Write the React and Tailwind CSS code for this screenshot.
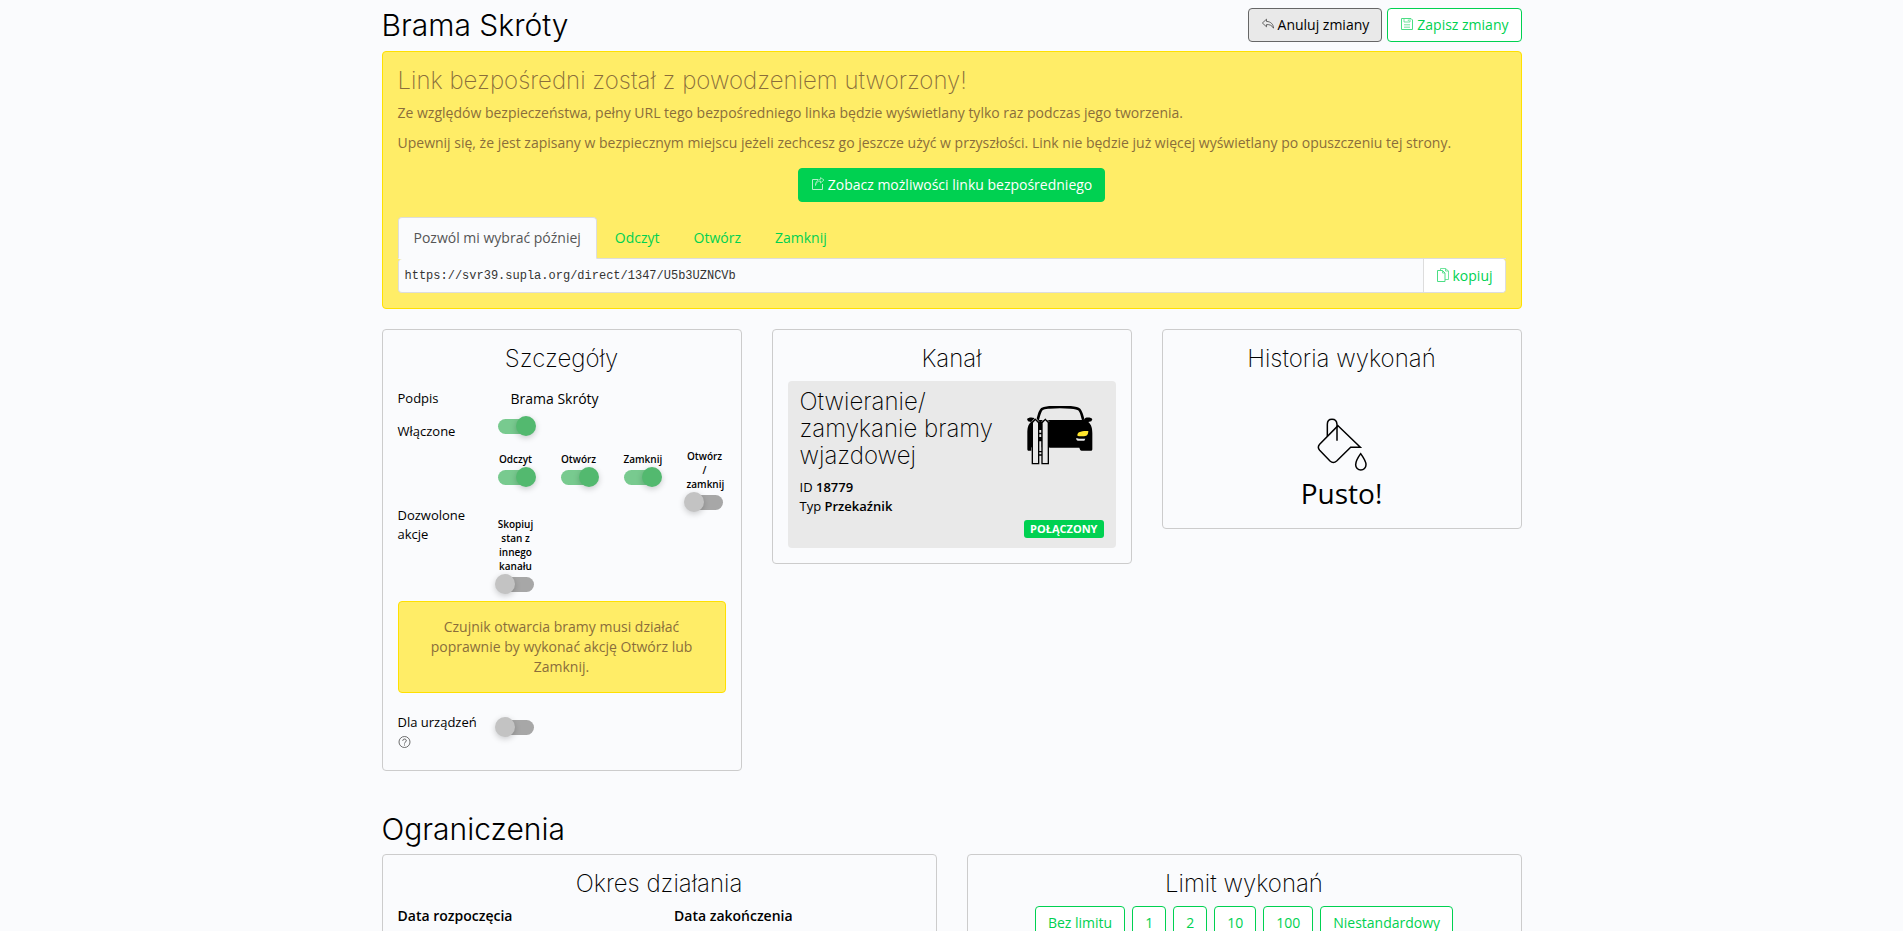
const heading = "font-['Inter',sans-serif] text-2xl leading-[27px] font-extralight";
const pageHeading = "font-['Inter',sans-serif] text-[30px] leading-[33px] font-light";
const button =
  "inline-flex h-[34px] cursor-pointer items-center justify-center gap-[3px] rounded border px-3 text-sm leading-5";

function LineIcon({ children, className = "" }) {
  return (
    <svg
      viewBox="0 0 14 14"
      fill="none"
      stroke="currentColor"
      strokeWidth="1"
      aria-hidden="true"
      className={`size-3.5 shrink-0 opacity-70 ${className}`}
    >
      {children}
    </svg>
  );
}

const UndoIcon = () => (
  <LineIcon className="-mt-0.5">
    <path d="M5.5 2.2 1.4 6l4.1 3.8V7.6c3.2-.2 5.4.7 7 3.6-.1-4-2.7-6.6-7-6.8z" strokeLinejoin="round" strokeWidth="0.8" />
  </LineIcon>
);

const SaveIcon = () => (
  <LineIcon className="-mt-0.5">
    <path d="M1.5 1.5h9.500l1.500 1.500v9.500h-11z" />
    <path d="M4 1.500v3.500h6v-3.500M8.300 2.500v1.500M4 7.800h6M4 10.200h6" strokeWidth="0.8" />
  </LineIcon>
);

const ShareIcon = () => (
  <LineIcon className="-mt-0.5">
    <path d="M7 2.500H1.500v10h10V7" />
    <path d="M4.500 8.500c.3-2.800 1.800-4.300 5-4.500V6l3.500-3L9.500.600v1.800C6 2.700 4.600 5 4.500 8.500z" strokeWidth="0.8" strokeLinejoin="round" />
  </LineIcon>
);

const CopyIcon = () => (
  <LineIcon className="-mt-0.5">
    <path d="M1.500 2.500h5L9 5v8.500H1.500z" />
    <path d="M6.500 2.500V5H9M4.500 2.500V.500h5l3 2.500v8.500H9M9.500.500V3h3" strokeWidth="0.8" />
  </LineIcon>
);

const HelpIcon = () => (
  <LineIcon>
    <circle cx="6.5" cy="7" r="5.5" strokeWidth="0.8" />
    <path d="M4.800 5.800c0-2.400 3.500-2.300 3.500 0 0 1.200-1.800 1.300-1.800 2.700M6.500 9.500v1" strokeWidth="0.9" />
  </LineIcon>
);

function GateIcon() {
  return (
    <svg viewBox="21 18 198 177" aria-hidden="true" className="h-[59px] w-[66px]">
      <path d="M53 60C57 44 59 33 66 27c5-4 12-4 22-5 21-2 43-2 64 0 12 1 21 2 26 7 6 6 8 18 12 31" fill="none" stroke="#000" strokeWidth="8" />
      <path d="M21 57c2-5 16-6 22-3l6 6h142l5-6c7-3 20-1 21 4l-3 6-9 2c9 8 12 18 12 34v46c0 4-1 6-5 6h-27c-4 0-5-3-7-9H66l-31 9h-9c-3 0-4-2-4-6v-46c0-16 2-26 11-34l-9-2z" />
      <path d="M34 142h54v12H34z" fill="#e9e9e9" />
      <path d="M177 97c9-4 18-5 28-4 0 7-2 12-6 14-8 2-17 2-26 1-2-3 0-8 4-11z" fill="#ffe52c" />
      <path d="M169 114c8 3 17 3 27 2l-3 6h-20c-3-1-5-4-4-8z" fill="#e9e9e9" />
      <path d="M57 90h8v8h-8zM57 103h8v8h-8zM57 124h8v26h-8z" fill="#e9e9e9" />
      <path d="M55 155h12M55 165h12" stroke="#000" strokeWidth="4" />
      <g fill="#e9e9e9" stroke="#000" strokeWidth="4">
        <path d="M37 191V68l9-10 10 10v123z" />
        <path d="M66 191V68l10-10 9 10v123z" />
      </g>
      <path d="M35 65 46 53l11 12M65 65l11-12 11 12" fill="none" stroke="#e9e9e9" strokeWidth="2" />
    </svg>
  );
}

function BucketIcon() {
  return (
    <svg viewBox="4 8 180 180" fill="none" stroke="#000" strokeWidth="4.5" aria-hidden="true" className="size-[60px]">
      <path d="M50 78V42q0-15 14-15t15 15v49" />
      <path d="m82 46 67 65h-29l-42 41q-10 9-20 0l-31-32q-8-9 0-18z" />
      <path d="M150 130c10 14 16 24 16 33a15.500 16 0 0 1-31 0c0-9 5-19 15-33z" />
    </svg>
  );
}

function Toggle({ id, defaultChecked }) {
  return (
    <input
      id={id}
      type="checkbox"
      role="switch"
      defaultChecked={defaultChecked}
      className="relative block h-[15px] w-9 shrink-0 cursor-pointer appearance-none rounded-full bg-[#a7a7a7] before:absolute before:-top-[3px] before:-left-[3px] before:size-5 before:rounded-full before:bg-[#c3c3c3] before:shadow-[0_2px_6px_rgba(0,0,0,0.2)] checked:bg-[#78ca8f] checked:before:left-[18px] checked:before:bg-[#53b96f]"
    />
  );
}

function Card({ title, children }) {
  return (
    <section className="rounded border border-[#ccc] p-[15px]">
      <h3 className={`${heading} mb-[9px] text-center`}>{title}</h3>
      {children}
    </section>
  );
}

const ACTIONS = [
  { id: "read", label: "Odczyt", on: true },
  { id: "open", label: "Otwórz", on: true },
  { id: "close", label: "Zamknij", on: true },
  { id: "open-close", label: "Otwórz / zamknij", on: false, tall: true },
  { id: "copy", label: "Skopiuj stan z innego kanału", on: false, tall: true },
];

const LIMITS = ["Bez limitu", "1", "2", "10", "100", "Niestandardowy"];

export default function App() {
  return (
    <div className="h-screen overflow-hidden bg-[#fafbfd] font-['Open_Sans','Noto_Sans',sans-serif] text-sm leading-5 text-black">
      <main className="mx-auto max-w-[1140px]">
        <header className="flex items-center justify-between pt-2 pb-[9px]">
          <h1 className={pageHeading}>Brama Skróty</h1>
          <div className="flex gap-[5px]">
            <button type="button" className={`${button} border-[#666] bg-[#e9e9e9]`}>
              <UndoIcon />
              Anuluj zmiany
            </button>
            <button type="button" className={`${button} border-[#00d151] bg-white text-[#00d151]`}>
              <SaveIcon />
              Zapisz zmiany
            </button>
          </div>
        </header>

        <section className="mb-5 rounded border border-[#ffe000] bg-[#ffed67] p-[15px] text-[#8a6d3b]">
          <h3 className={`${heading} mb-[9px]`}>Link bezpośredni został z powodzeniem utworzony!</h3>
          <p className="mb-2.5">
            Ze względów bezpieczeństwa, pełny URL tego bezpośredniego linka będzie wyświetlany tylko raz podczas jego
            tworzenia.
          </p>
          <p className="mb-[15px]">
            Upewnij się, że jest zapisany w bezpiecznym miejscu jeżeli zechcesz go jeszcze użyć w przyszłości. Link nie
            będzie już więcej wyświetlany po opuszczeniu tej strony.
          </p>
          <div className="mb-[15px] flex justify-center">
            <a href="#link" className={`${button} border-[#00d151] bg-[#00d151] text-white`}>
              <ShareIcon />
              Zobacz możliwości linku bezpośredniego
            </a>
          </div>
          <nav className="flex gap-0.5 border-b border-[#ddd]">
            <a
              href="#later"
              className="-mb-px rounded-t border border-[#ddd] border-b-[#fafbfd] bg-[#fafbfd] px-[15px] py-2.5 text-[#555]"
            >
              Pozwól mi wybrać później
            </a>
            {["Odczyt", "Otwórz", "Zamknij"].map((tab) => (
              <a
                key={tab}
                href={`#${tab}`}
                className="-mb-px border border-transparent px-[15px] py-2.5 text-[#00d151]"
              >
                {tab}
              </a>
            ))}
          </nav>
          <div className="flex h-[34px] overflow-hidden rounded border border-t-0 border-[#ddd] bg-[#fafbfd]">
            <input
              type="text"
              readOnly
              aria-label="Link bezpośredni"
              defaultValue="https://svr39.supla.org/direct/1347/U5b3UZNCVb"
              className="min-w-0 flex-1 px-1.5 font-['Liberation_Mono',monospace] text-xs text-[#333] outline-none"
            />
            <button
              type="button"
              className="flex cursor-pointer items-center gap-[3px] border-l border-[#ddd] bg-white px-3 text-[#00d151]"
            >
              <CopyIcon />
              kopiuj
            </button>
          </div>
        </section>

        <div className="grid grid-cols-3 items-start gap-[30px]">
          <Card title="Szczegóły">
            <div className="grid grid-cols-[100px_1fr] text-[13px] leading-[19px]">
              <label htmlFor="caption" className="self-center">
                Podpis
              </label>
              <input
                id="caption"
                type="text"
                defaultValue="Brama Skróty"
                className="h-[34px] w-full min-w-0 px-[13px] text-sm outline-none"
              />
              <label htmlFor="enabled" className="pt-[7px]">
                Włączone
              </label>
              <div className="h-[34px] pt-1">
                <Toggle id="enabled" defaultChecked />
              </div>
              <span className="self-center pr-4">Dozwolone akcje</span>
              <div className="flex flex-wrap items-start gap-x-[27px] gap-y-[7px] pb-[9px]">
                {ACTIONS.map(({ id, label, on, tall }) => (
                  <div key={id} className={`flex w-9 flex-col gap-1 ${tall ? "" : "pt-[3px]"}`}>
                    <label htmlFor={id} className="text-center text-[10px] leading-[14px] font-semibold">
                      {label}
                    </label>
                    <Toggle id={id} defaultChecked={on} />
                  </div>
                ))}
              </div>
            </div>
            <p className="mb-5 rounded border border-[#ffe000] bg-[#ffed67] p-[15px] text-center text-[#8a6d3b]">
              Czujnik otwarcia bramy musi działać poprawnie by wykonać akcję Otwórz lub Zamknij.
            </p>
            <div className="grid grid-cols-[100px_1fr] text-[13px] leading-[19px]">
              <div className="pb-1">
                <label htmlFor="devices">Dla urządzeń</label>
                <button type="button" aria-label="Pomoc" className="flex h-[19px] cursor-pointer items-center">
                  <HelpIcon />
                </button>
              </div>
              <div className="pt-[7px]">
                <Toggle id="devices" />
              </div>
            </div>
          </Card>

          <Card title="Kanał">
            <div className="rounded bg-[#e9e9e9] px-3 pt-[7px] pb-2.5 text-[13px] leading-[19px]">
              <div className="mb-[9px] flex">
                <h3 className={`${heading} flex-1`}>Otwieranie/ zamykanie bramy wjazdowej</h3>
                <div className="pt-[18px] pr-[11px]">
                  <GateIcon />
                </div>
              </div>
              <p>
                ID <strong className="font-semibold">18779</strong>
              </p>
              <p className="mb-1">
                Typ <strong className="font-semibold">Przekaźnik</strong>
              </p>
              <div className="flex justify-end">
                <span className="rounded-[3px] bg-[#00d151] px-1.5 text-[11px] leading-[18px] font-bold text-white">
                  POŁĄCZONY
                </span>
              </div>
            </div>
          </Card>

          <Card title="Historia wykonań">
            <div className="flex flex-col items-center pt-8">
              <BucketIcon />
              <p className="text-[28px] leading-10">Pusto!</p>
            </div>
          </Card>
        </div>

        <h2 className={`${pageHeading} mt-[42px] mb-2`}>Ograniczenia</h2>
        <div className="grid grid-cols-2 gap-[30px]">
          <Card title="Okres działania">
            <div className="grid grid-cols-2 gap-[30px] font-semibold">
              <span>Data rozpoczęcia</span>
              <span>Data zakończenia</span>
            </div>
          </Card>
          <Card title="Limit wykonań">
            <div className="flex justify-center gap-[7px]">
              {LIMITS.map((limit) => (
                <button key={limit} type="button" className={`${button} border-[#00d151] bg-white text-[#00d151]`}>
                  {limit}
                </button>
              ))}
            </div>
          </Card>
        </div>
      </main>
    </div>
  );
}
